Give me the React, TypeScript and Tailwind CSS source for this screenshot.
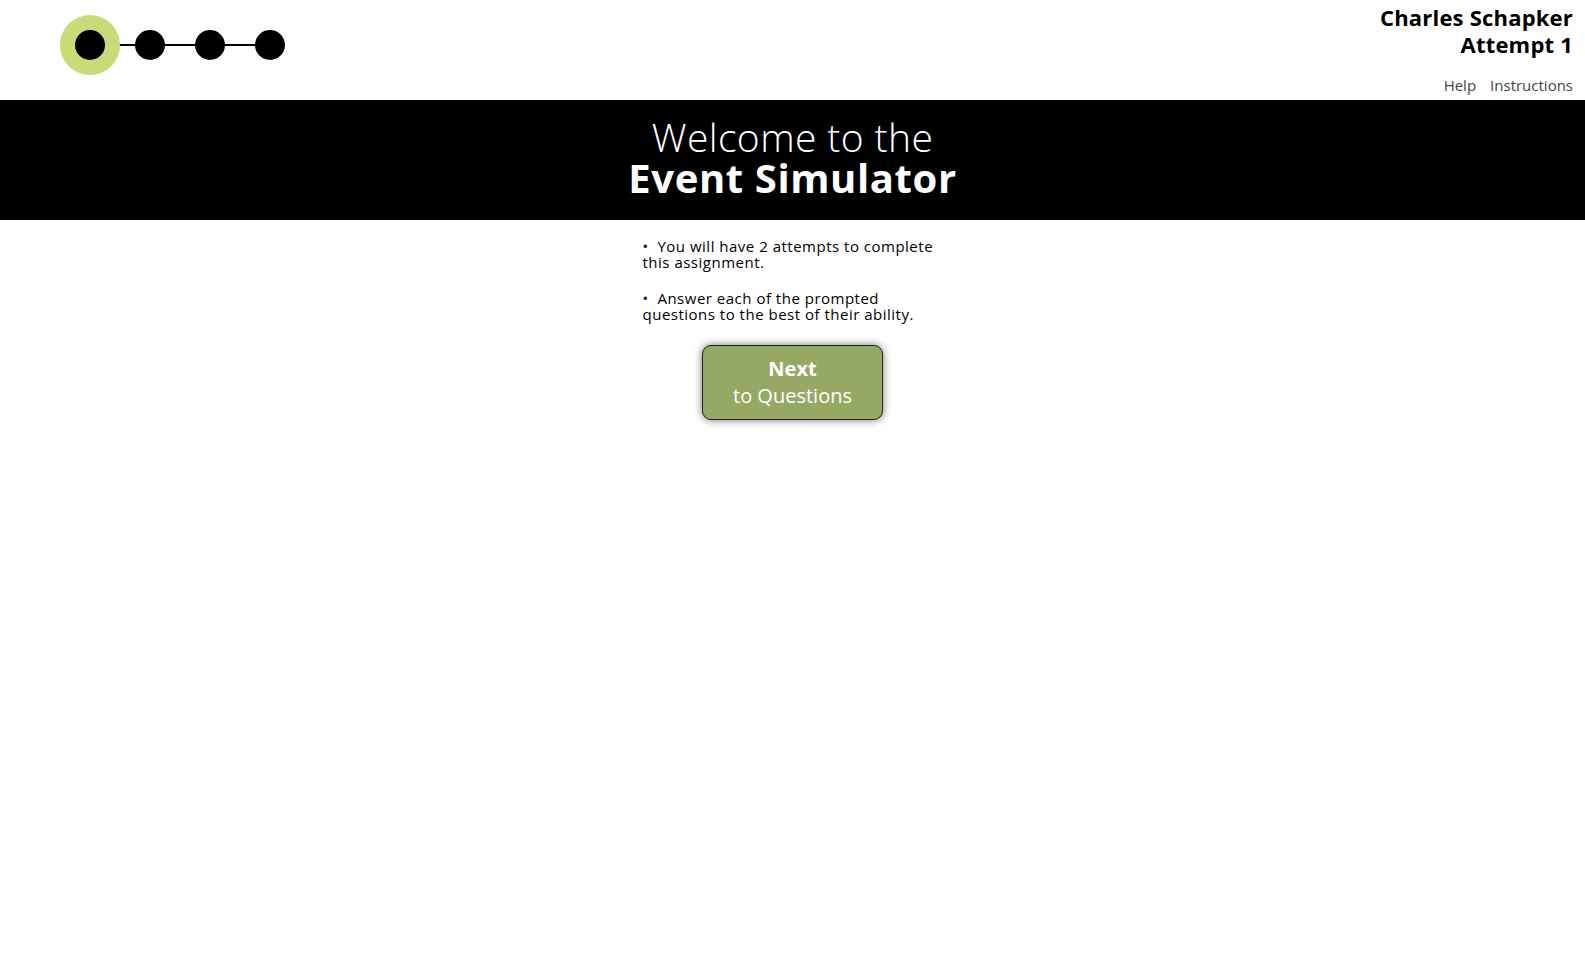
import React from "react";

function Logo() {
  return (
    <svg width="240" height="70" viewBox="0 0 240 70" className="block">
      <line x1="30" y1="35" x2="210" y2="35" stroke="#000" strokeWidth="2" />
      <circle cx="30" cy="35" r="30" fill="#c5dc77" />
      <circle cx="30" cy="35" r="15" fill="#000" />
      <circle cx="90" cy="35" r="15" fill="#000" />
      <circle cx="150" cy="35" r="15" fill="#000" />
      <circle cx="210" cy="35" r="15" fill="#000" />
    </svg>
  );
}

export default function App() {
  const font = { fontFamily: "'Open Sans', Lato, sans-serif" };
  return (
    <div className="min-h-screen bg-white text-black" style={font}>
      <header className="flex h-[100px] items-start justify-between">
        <div className="pl-[60px] pt-[10px]">
          <Logo />
        </div>
        <div className="flex flex-col items-end pr-[12px] pt-[4px]">
          <div className="text-[22px] font-bold leading-[27px] tracking-[0.2px]">Charles Schapker</div>
          <div className="text-[22px] font-bold leading-[27px] tracking-[0.2px]">Attempt 1</div>
          <div className="mt-[18px] flex gap-[14px] text-[15px] leading-[18px] text-[#444]">
            <span>Help</span>
            <span>Instructions</span>
          </div>
        </div>
      </header>
      <div className="flex h-[120px] flex-col items-center justify-center bg-black pb-[6px] text-white">
        <div className="text-[39px] font-light leading-[41px] tracking-[0.4px]">Welcome to the</div>
        <div className="text-[40px] font-bold leading-[41px] tracking-[0.6px]">Event Simulator</div>
      </div>
      <div className="flex flex-col items-center pt-[18px]">
        <div className="w-[300px] text-[15px] leading-[16px] tracking-[0.5px]">
          <p className="w-[292px]">• &nbsp;You will have 2 attempts to complete this assignment.</p>
          <p className="mt-[20px] w-[292px]">• &nbsp;Answer each of the prompted questions to the best of their ability.</p>
        </div>
        <button className="mt-[23px] flex h-[75px] w-[181px] flex-col items-center justify-center rounded-[9px] border border-[#222] bg-[#95a964] text-white shadow-[0_0_8px_rgba(0,0,0,0.55)]">
          <span className="text-[20px] font-bold leading-[26px]">Next</span>
          <span className="text-[20px] leading-[28px]">to Questions</span>
        </button>
      </div>
    </div>
  );
}
